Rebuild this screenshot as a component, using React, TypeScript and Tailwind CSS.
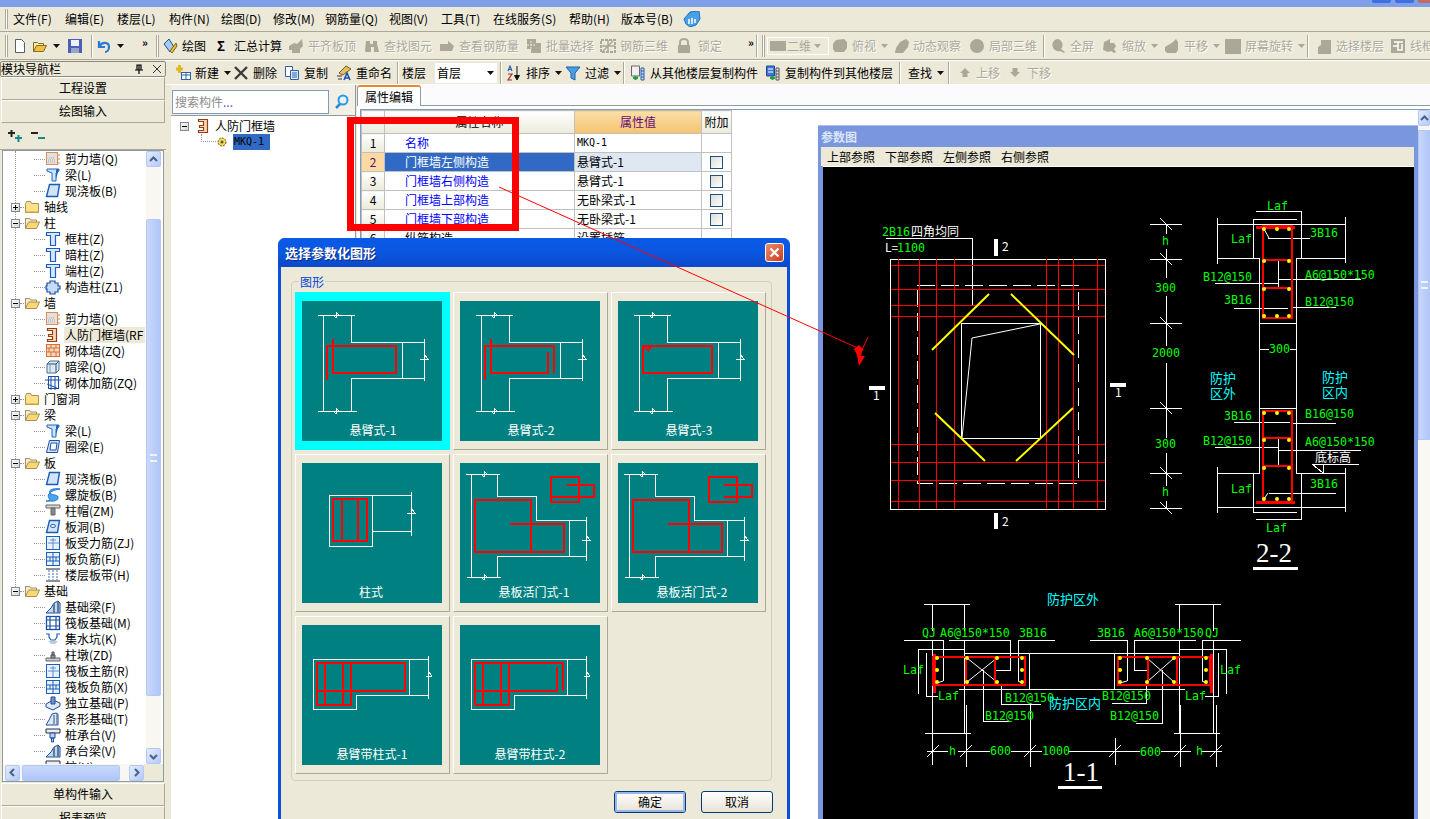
import React from 'react';

const GREY = '#aca899';

// ---- small pixel-style icons ----
const Svg = ({ children, w = 16, h = 16 }: { children: React.ReactNode; w?: number; h?: number }) => (
  <svg width={w} height={h} viewBox={`0 0 ${w} ${h}`} className="block shrink-0">{children}</svg>
);

const treeIcons: Record<string, React.ReactNode> = {
  wall: <><rect x="1.5" y="1.5" width="11" height="12" fill="#e4e0dc" stroke="#d98a60" /><path d="M3 11h8M3 9h8M4 7h6" stroke="#aaa" strokeDasharray="1 1" /><path d="M14 3v2M14 7v2M14 11v2" stroke="#e08020" /></>,
  beam: <><path d="M2 2h12v2l-3 2v8H7V6L2 4z" fill="#cfe3fa" stroke="#1c66c0" /><path d="M11 2l3 0-3 10z" fill="#1c66c0" /></>,
  slab: <path d="M4.5 1.5h10l-2 12h-11z" fill="#cfe3fa" stroke="#1b5bb4" strokeWidth="1.4" />,
  ring: <path d="M4.5 1.5h10l-2 12h-11zM6 4l-1 7h6l1-7z" fill="#cfe3fa" fillRule="evenodd" stroke="#1b4fa8" />,
  col: <path d="M1.5 1.5h13v3h-4v10h-5v-10h-4z" fill="#d7e7fb" stroke="#1c5fb8" strokeWidth="1.2" />,
  struct: <path d="M5 2h5v2h3v3h2v3h-2v3h-3v2H5v-2H2v-3H1V7h1V4h3z" fill="#c6dcf6" stroke="#1c4fa4" strokeWidth="1.2" />,
  door: <path d="M2.5 1.5h9v13h-9v-2h5v-3h-4v-2h4v-4h-5z" fill="#f4d9b8" stroke="#9a3c10" strokeWidth="1.2" />,
  brick: <><rect x="1.5" y="1.5" width="13" height="12" fill="#f6d8bc" stroke="#d8703a" /><path d="M2 5h12M2 9h12M6 2v3M11 2v3M4 5v4M9 5v4M6 9v4M11 9v4" stroke="#d8703a" /></>,
  hidden: <><path d="M2 5l3-3h9v9l-3 3H2z" fill="#dce8f4" stroke="#4a6c90" /><path d="M2 5h9v9M11 5l3-3" fill="none" stroke="#35506e" /><path d="M5 5v9" stroke="#7a9abc" /></>,
  net: <><rect x="3.5" y="1.5" width="10" height="12" fill="none" stroke="#1b4fa8" /><path d="M0 5h16M6 1v14M10 1v14M2 9l10 4" stroke="#1b4fa8" /></>,
  spiral: <path d="M15 2C8 1 3 3 5 6s9 1 8 5-6 3-12 3c6 0 3-2 3-3-3-4 3-8 11-9z" fill="#4aa4ee" stroke="#1c78d0" />,
  cap: <><path d="M1 2h14v3H1z" fill="#d8d8d8" stroke="#666" /><path d="M6 5h4v7H6z" fill="#888" stroke="#666" /></>,
  hole: <><path d="M4.5 1.5h10l-2 12h-11z" fill="#cfe3fa" stroke="#1b5bb4" strokeWidth="1.4" /><ellipse cx="8" cy="7" rx="2.5" ry="1.5" fill="#fff" stroke="#1b5bb4" /></>,
  grid: <><rect x="1.5" y="1.5" width="13" height="13" fill="#e8f1fc" stroke="#1c5fb8" /><path d="M8 3v11M3 8h11M5 5h6" stroke="#5d8fd0" /></>,
  gridb: <><rect x="1.5" y="1.5" width="13" height="13" fill="#e8f1fc" stroke="#1c5fb8" /><path d="M8 2v12M2 6h12M2 10h12M5 6v4M11 6v4" stroke="#1c5fb8" /></>,
  band: <><path d="M1 2h14M1 14h14" stroke="#222" /><path d="M4 3v10M8 3v10M12 3v10" stroke="#3a70c0" strokeDasharray="2 1" /></>,
  fbeam: <><path d="M1 14h14V4l-2-2-4 2-3 5-5 5z" fill="#c2d8f2" stroke="#1c4fa4" /><path d="M9 4v10M13 3v11" stroke="#607a9a" strokeWidth="2" /></>,
  mat: <><rect x="1.5" y="1.5" width="13" height="13" fill="#fff" stroke="#1c4fa4" strokeWidth="1.3" /><path d="M5 2v12M11 2v12M2 5h12M2 11h12" stroke="#1c4fa4" strokeWidth="1.2" /></>,
  pit: <><path d="M1 3h3v3l2 3h4l2-3V3h3" fill="none" stroke="#1c5fb8" strokeWidth="1.2" /><path d="M3 10l3 3h4l3-3z" fill="#bcd" /></>,
  pier: <><path d="M1 11h14v3H1z" fill="#ccc" stroke="#666" /><path d="M6 8h4v3H6zM7 5h2v3H7z" fill="#89a" stroke="#556" /></>,
  foot: <><path d="M1 9l7-4 7 3v3l-7 4-7-3z" fill="#dfe9f6" stroke="#1c4fa4" /><path d="M6 2h4v7H6z" fill="#7a94b4" stroke="#1c4fa4" /></>,
  strip: <><path d="M1 14l3-5 3-6 4-1 2 1v11z" fill="#dfe9f6" stroke="#1c4fa4" /><path d="M9 4v9M12 3v11" stroke="#708aa8" strokeWidth="1.6" /></>,
  pile: <><path d="M1 2h14v4H1z" fill="#e8eef6" stroke="#28303c" /><path d="M5 6h5v5H5zM6.500 11h2v4h-2z" fill="#c0d2e8" stroke="#1c4fa4" /></>,
};

const FolderClosed = () => (
  <svg width="16" height="14" viewBox="0 0 16 14" className="block shrink-0">
    <path d="M1.5 3.5l1-2h4l1 2h7v9h-13z" fill="#fbe28a" stroke="#a89050" />
    <path d="M2 11.5h12.5v1H2z" fill="#d8a830" />
  </svg>
);
const FolderOpen = () => (
  <svg width="16" height="14" viewBox="0 0 16 14" className="block shrink-0">
    <path d="M1.5 12.5v-10h4l1 1.5h6v2" fill="#f4f0d8" stroke="#a89050" />
    <path d="M1.5 12.5l3-6.5h11l-3 6.5z" fill="#f8d878" stroke="#a89050" />
  </svg>
);

type Node = { t: string; i?: string; open?: boolean; sel?: boolean; last?: boolean };
const tree: Node[] = [
  { t: '剪力墙(Q)', i: 'wall' }, { t: '梁(L)', i: 'beam' }, { t: '现浇板(B)', i: 'slab', last: true },
  { t: '轴线', open: false },
  { t: '柱', open: true },
  { t: '框柱(Z)', i: 'col' }, { t: '暗柱(Z)', i: 'col' }, { t: '端柱(Z)', i: 'col' }, { t: '构造柱(Z1)', i: 'struct', last: true },
  { t: '墙', open: true },
  { t: '剪力墙(Q)', i: 'wall' }, { t: '人防门框墙(RF', i: 'door', sel: true }, { t: '砌体墙(ZQ)', i: 'brick' }, { t: '暗梁(Q)', i: 'hidden' }, { t: '砌体加筋(ZQ)', i: 'net', last: true },
  { t: '门窗洞', open: false },
  { t: '梁', open: true },
  { t: '梁(L)', i: 'beam' }, { t: '圈梁(E)', i: 'ring', last: true },
  { t: '板', open: true },
  { t: '现浇板(B)', i: 'slab' }, { t: '螺旋板(B)', i: 'spiral' }, { t: '柱帽(ZM)', i: 'cap' }, { t: '板洞(B)', i: 'hole' }, { t: '板受力筋(ZJ)', i: 'grid' }, { t: '板负筋(FJ)', i: 'gridb' }, { t: '楼层板带(H)', i: 'band', last: true },
  { t: '基础', open: true },
  { t: '基础梁(F)', i: 'fbeam' }, { t: '筏板基础(M)', i: 'mat' }, { t: '集水坑(K)', i: 'pit' }, { t: '柱墩(ZD)', i: 'pier' }, { t: '筏板主筋(R)', i: 'grid' }, { t: '筏板负筋(X)', i: 'gridb' }, { t: '独立基础(P)', i: 'foot' }, { t: '条形基础(T)', i: 'strip' }, { t: '桩承台(V)', i: 'pile' }, { t: '承台梁(V)', i: 'fbeam' }, { t: '桩(U)', i: 'pile' },
];

const Expander = ({ open }: { open: boolean }) => (
  <span className="w-[9px] h-[9px] border border-[#7b8ba0] bg-linear-to-br from-white to-[#d8d4c4] flex items-center justify-center relative shrink-0">
    <span className="w-[5px] h-px bg-black" />
    {!open && <span className="absolute w-px h-[5px] bg-black" />}
  </span>
);

const TreeRow = ({ n }: { n: Node }) =>
  n.i ? (
    <div className="h-[16px] flex items-center relative pl-[31px]">
      <span className="w-[11px] border-t border-dotted border-[#999]" />
      <span className="w-[16px] flex justify-center"><Svg>{treeIcons[n.i]}</Svg></span>
      <span className={`ml-[3px] pl-[1px] h-[16px] leading-[16px] whitespace-nowrap ${n.sel ? 'bg-[#ece9d8] w-[81px] overflow-hidden' : ''}`}>{n.t}</span>
    </div>
  ) : (
    <div className="h-[16px] flex items-center pl-[8px]">
      <Expander open={!!n.open} />
      <span className="w-[4px] border-t border-dotted border-[#999]" />
      {n.open ? <FolderOpen /> : <FolderClosed />}
      <span className="ml-[4px] whitespace-nowrap">{n.t}</span>
    </div>
  );

const ScrollArrow = ({ d, className = '' }: { d: string; className?: string }) => (
  <div className={`border border-[#b4c8f6] rounded-[2px] bg-linear-to-br from-[#e2ebfe] to-[#b6caf8] flex items-center justify-center shrink-0 ${className}`}>
    <svg width="9" height="9" viewBox="0 0 9 9"><path d={d} fill="none" stroke="#4d6185" strokeWidth="2" /></svg>
  </div>
);

const SideBtn = ({ t, className = '' }: { t: string; className?: string }) => (
  <div className={`mx-[1px] pb-[1px] shrink-0 bg-[#ece9d8] border-t border-l border-white border-b border-b-[#aca899] border-r border-r-[#aca899] flex items-center justify-center text-[12px] ${className}`}>{t}</div>
);

const Sidebar = () => (
  <aside className="w-[166px] shrink-0 flex flex-col h-[759px] overflow-hidden">
    <div className="h-[16px] shrink-0 mt-[1px] border border-[#8a8a80] rounded-[2px] flex items-center pr-[4px] text-[12px] leading-none">
      <span className="flex-1 whitespace-nowrap">模块导航栏</span>
      <svg width="10" height="11" viewBox="0 0 10 11" className="mr-[9px]"><path d="M3 1h4v5H3zM1 6h8M5 6v4M5 1v5" fill="none" stroke="#000" strokeWidth="1.2" /></svg>
      <svg width="8" height="8" viewBox="0 0 8 8"><path d="M0 0l8 8M8 0L0 8" stroke="#333" /></svg>
    </div>
    <SideBtn t="工程设置" className="h-[23px]" />
    <SideBtn t="绘图输入" className="h-[23px]" />
    <div className="h-[27px] shrink-0 flex items-center pl-[7px] gap-[7px] border-b border-[#aca899]">
      <svg width="16" height="14" viewBox="0 0 16 14"><path d="M1 4h7M4.500 1v7" stroke="#222" strokeWidth="2" /><path d="M8 9h7M11.500 6v7" stroke="#108a8a" strokeWidth="2" /></svg>
      <svg width="16" height="14" viewBox="0 0 16 14"><path d="M1 4h7" stroke="#222" strokeWidth="2" /><path d="M8 9h7" stroke="#108a8a" strokeWidth="2" /></svg>
    </div>
    <div className="h-[632px] shrink-0 mx-[2px] border border-[#919b9c] bg-white flex flex-col overflow-hidden">
      <div className="flex-1 min-h-0 flex">
        <div className="flex-1 min-w-0 relative overflow-hidden text-[12px] leading-[16px]">
          <span className="absolute left-[12px] top-[0px] h-[440px] border-l border-dotted border-[#999]" />
          <div className="relative">
            {tree.map((n, i) => <TreeRow key={i} n={n} />)}
          </div>
        </div>
        <div className="w-[15px] mr-[2px] shrink-0 flex flex-col bg-[#f8f7f2]">
          <ScrollArrow d="M1 6l3.500-3.500L8 6" className="h-[16px]" />
          <div className="h-[52px] shrink-0" />
          <div className="h-[477px] shrink-0 border border-[#b4c8f6] rounded-[2px] bg-linear-to-r from-[#c8d8fc] to-[#b0c6f8] flex items-center justify-center">
            <div className="w-[7px] h-[8px] border-y-2 border-double border-[#eef3ff]" />
          </div>
          <div className="flex-1" />
          <ScrollArrow d="M1 3l3.500 3.500L8 3" className="h-[16px]" />
        </div>
      </div>
      <div className="h-[17px] shrink-0 flex items-center bg-[#ece9d8]">
        <div className="flex items-center pl-[2px] w-[141px] bg-[#f8f7f2] h-full">
          <ScrollArrow d="M6 1L2.500 4.500 6 8" className="w-[15px] h-[16px]" />
          <div className="ml-[2px] w-[98px] h-[16px] border border-[#b4c8f6] rounded-[2px] bg-linear-to-b from-[#c8d8fc] to-[#b0c6f8]" />
          <div className="flex-1" />
          <ScrollArrow d="M3 1l3.500 3.500L3 8" className="w-[15px] h-[16px]" />
        </div>
      </div>
    </div>
    <SideBtn t="单构件输入" className="h-[23px] mt-[1px]" />
    <SideBtn t="报表预览" className="h-[24px]" />
  </aside>
);

// ---- toolbars ----
const toolIcons: Record<string, React.ReactNode> = {
  new: <path d="M3.500 1.500h6l3 3v10h-9z" fill="#fff" stroke="#55606e" />,
  open: <><path d="M1.500 13.500v-9h4l1 1h5v2" fill="#f7e9b0" stroke="#8a6a20" /><path d="M1.500 13.500l3-6h10l-3 6z" fill="#f0c040" stroke="#8a6a20" /></>,
  save: <><rect x="1" y="1" width="14" height="14" fill="#4a5fb8" /><rect x="4" y="2" width="8" height="6" fill="#eef" /><rect x="4" y="10" width="8" height="5" fill="#9aa4c8" /></>,
  undo: <path d="M3 3v6h6M3.500 8.500C6 3 13 4 13 9c0 3-2 5-4 5" fill="none" stroke="#2c78d8" strokeWidth="2.200" />,
  draw: <><path d="M2 6l5-5 5 8-4 5z" fill="#a8c8ee" stroke="#1c4f90" /><path d="M8 13l6-8 1 3-5 7z" fill="#e8c040" stroke="#806010" /></>,
  plus: <><path d="M1 4h7M4.500 0v8" stroke="#e0b820" strokeWidth="3" /><rect x="6.500" y="7.500" width="9" height="7" fill="#fff" stroke="#2c60a8" /><path d="M7 10h8M11 8v6" stroke="#2c60a8" /></>,
  del: <path d="M2 2l12 12M14 2L2 14" stroke="#3c3c3c" strokeWidth="2.400" />,
  copy: <><path d="M1.500 1.500h7v10h-7z" fill="#fff" stroke="#2c60a8" /><path d="M6.500 5.500h8v9h-8z" fill="#dce8fa" stroke="#2c60a8" /><path d="M8 8h5M8 10h5M8 12h5" stroke="#2c60a8" /></>,
  rename: <><path d="M3 8l7-7 5 3-8 6z" fill="#e4c060" stroke="#70601c" /><path d="M1 11h5M2 14h4" stroke="#707070" strokeWidth="1.500" /><path d="M8 15l3-7 3 7M9 13h4" fill="none" stroke="#2050b0" strokeWidth="1.600" /></>,
  sort: <><path d="M2 6l2-5 2 5M2.500 4.500h3" fill="none" stroke="#3060b0" strokeWidth="1.200" /><path d="M2 9h4l-4 6h4" fill="none" stroke="#a03030" strokeWidth="1.200" /><path d="M11 1v12M8.500 10.500L11 15l2.500-4.500z" fill="#111" stroke="#111" /></>,
  filter: <path d="M1 2h14l-5 6v7l-4-2V8z" fill="#4a9ee8" stroke="#1c60a8" />,
  from: <><path d="M1.500 1h8v10h-8z" fill="#f0f0f0" stroke="#666" /><path d="M11 3h3v12h-3z" fill="#c4d8f4" stroke="#2c60a8" /><path d="M11 6h3M11 9h3M11 12h3" stroke="#2c60a8" /><path d="M3 13h5M5.500 11v4" stroke="#20a040" strokeWidth="2" /></>,
  to: <><path d="M1.500 1h8v10h-8z" fill="#3c78d8" stroke="#204890" /><path d="M3 4h5M3 7h5" stroke="#fff" /><path d="M11 3h3v12h-3z" fill="#e8e8e8" stroke="#555" /><path d="M11 6h3M11 9h3M11 12h3" stroke="#555" /><path d="M5 13h5M7.500 11v4" stroke="#20a040" strokeWidth="2" /></>,
  // disabled icons are flat silhouettes
  flat1: <path d="M1 8l5-3 3 1 5-5 1 7-3 3v4H4v-3H1z" fill={GREY} />,
  binoc: <path d="M2 3h4v3h3V3h4v3l2 8h-5V9H7v5H2l-1-1z" fill={GREY} />,
  view: <path d="M1 6h8V3l6 5-2 5H1z" fill={GREY} />,
  batch: <><path d="M1 1h9v4h5v10H5v-4H1z" fill={GREY} /><path d="M5 3v8M1 7h9" stroke="#ece9d8" strokeDasharray="2 1" /></>,
  rebar3: <><path d="M1 2h14v12H1z" fill="none" stroke={GREY} strokeWidth="2" strokeDasharray="3 1" /><path d="M3 13L13 3M1 8h14M8 2v12" stroke={GREY} strokeWidth="1.500" /></>,
  lock: <><path d="M4 7V4a4 3 0 018 0v3" fill="none" stroke={GREY} strokeWidth="2" /><rect x="2" y="7" width="12" height="8" fill={GREY} /></>,
  top: <path d="M4 2l8-1 3 3v6l-3 4H3L1 11V6z" fill={GREY} />,
  orbit: <path d="M2 15l1-5 4-6 6-3 3 3-1 5-5 6z" fill={GREY} />,
  part: <path d="M8 1a7 7 0 110 14A7 7 0 018 1z" fill={GREY} />,
  zoomall: <path d="M7 1a6 6 0 014 10l4 3-1 1-4-2A6 6 0 117 1z" fill={GREY} />,
  zoom: <path d="M2 4l6-3v4h4l2 3-2 3 2 3-2 1-3-2-3 1-5-2z" fill={GREY} />,
  pan: <path d="M1 9l5-3 3-2 3-3 2 3v8l-2 3H3l-2-2z" fill={GREY} />,
  rot: <rect x="0" y="1" width="16" height="15" fill={GREY} />,
  floor: <path d="M5 2h10v14H2V9l3-2z" fill={GREY} />,
  wire: <><rect x="1" y="1" width="14" height="14" fill={GREY} /><path d="M4 4h9M8 4v8M3 8h5M12 6v6H7" stroke="#fff" strokeWidth="1.500" fill="none" /></>,
  up: <path d="M6 1l5 5H8.500v4h-5V6H1z" fill={GREY} />,
  down: <path d="M3.500 1h5v4H11l-5 5-5-5h2.500z" fill={GREY} />,
};

const Caret = ({ dim }: { dim?: boolean }) => (
  <svg width="7" height="4" viewBox="0 0 7 4" className="shrink-0"><path d="M0 0h7L3.500 4z" fill={dim ? GREY : '#111'} /></svg>
);
const Grip = () => <span className="block w-[3px] h-[22px] border-x border-[#aca899] bg-white shrink-0" />;
const Sep = () => <span className="block w-[1px] h-[22px] bg-[#aca899] shrink-0 border-r border-white box-content" />;
const More = () => <span className="block text-[11px] font-bold leading-none -mt-[6px]">»</span>;

type ToolProps = { i?: string; t?: string; off?: boolean; caret?: boolean; className: string; gap?: string };
const Tool = ({ i, t, off, caret, className, gap = 'ml-[4px]' }: ToolProps) => (
  <div className={`flex items-center shrink-0 h-full ${className}`}>
    {i && <Svg>{toolIcons[i]}</Svg>}
    {t && <span className={`whitespace-nowrap ${i ? gap : ''} ${off ? 'text-[#aca899] [text-shadow:1px_1px_0_#fff]' : ''}`}>{t}</span>}
    {caret && <span className="ml-[5px]"><Caret dim={off} /></span>}
  </div>
);

const menus = [
  ['文件(F)', 'w-[52px]'], ['编辑(E)', 'w-[52px]'], ['楼层(L)', 'w-[52px]'], ['构件(N)', 'w-[52px]'], ['绘图(D)', 'w-[52px]'], ['修改(M)', 'w-[52px]'],
  ['钢筋量(Q)', 'w-[64px]'], ['视图(V)', 'w-[52px]'], ['工具(T)', 'w-[52px]'], ['在线服务(S)', 'w-[76px]'], ['帮助(H)', 'w-[52px]'], ['版本号(B)', 'w-[62px]'],
];

const MenuBar = () => (
  <div className="h-[25px] shrink-0 flex items-center pl-[13px] text-[12px] border-b border-[#aca899] relative">
    <span className="absolute left-[5px] top-[2px] h-[20px] w-[3px] border-x border-[#aca899] bg-white" />
    {menus.map(([t, w]) => <span key={t} className={`whitespace-nowrap shrink-0 ${w}`}>{t}</span>)}
    <svg width="18" height="16" viewBox="0 0 18 16" className="shrink-0">
      <path d="M1 8l6-7 9-1 1 8-4 6-6 2-4-3z" fill="#4aa0e8" stroke="#1c70c0" />
      <path d="M6 8v5M9 7v6M12 8v4" stroke="#fff" strokeWidth="1.500" />
    </svg>
  </div>
);

const MainToolbar = () => (
  <div className="h-[28px] shrink-0 flex items-center overflow-hidden text-[12px] border-b border-[#aca899]">
    <div className="w-[12px] pl-[5px] shrink-0"><Grip /></div>
    <Tool i="new" className="w-[20px]" />
    <Tool i="open" caret className="w-[35px]" />
    <Tool i="save" className="w-[23px]" />
    <div className="w-[6px] pl-[1px] shrink-0"><Sep /></div>
    <Tool i="undo" caret className="w-[34px]" />
    <div className="w-[22px] pl-[12px] shrink-0"><More /></div>
    <div className="w-[10px] pl-[4px] shrink-0"><Grip /></div>
    <Tool i="draw" t="绘图" className="w-[53px]" />
    <div className="w-[73px] flex items-center shrink-0"><span className="w-[12px] pl-[2px] font-bold text-[13px]">Σ</span><span className="ml-[7px]">汇总计算</span></div>
    <Tool i="flat1" t="平齐板顶" off className="w-[76px]" />
    <Tool i="binoc" t="查找图元" off className="w-[75px]" />
    <Tool i="view" t="查看钢筋量" off className="w-[87px]" />
    <Tool i="batch" t="批量选择" off className="w-[74px]" />
    <Tool i="rebar3" t="钢筋三维" off className="w-[76px]" />
    <Tool i="lock" t="锁定" off className="w-[69px]" gap="ml-[6px]" />
    <div className="w-[11px] pl-[3px] shrink-0"><More /></div>
    <div className="w-[11px] flex gap-[4px] shrink-0"><Sep /><Grip /></div>
    <div className="w-[62px] h-[18px] border border-white shrink-0 flex items-center px-[2px] gap-[1px]">
      <span className="w-[16px] h-[10px] bg-[#aca899]" />
      <span className="w-[26px] text-[#aca899]">二维</span>
      <Caret dim />
    </div>
    <Tool i="top" t="俯视" off caret className="w-[61px] ml-[3px]" />
    <Tool i="orbit" t="动态观察" off className="w-[76px]" />
    <Tool i="part" t="局部三维" off className="w-[74px]" />
    <div className="w-[7px] shrink-0"><Sep /></div>
    <Tool i="zoomall" t="全屏" off className="w-[52px]" />
    <Tool i="zoom" t="缩放" off caret className="w-[62px]" />
    <Tool i="pan" t="平移" off caret className="w-[61px]" />
    <Tool i="rot" t="屏幕旋转" off caret className="w-[82px]" />
    <div className="w-[9px] shrink-0"><Sep /></div>
    <Tool i="floor" t="选择楼层" off className="w-[74px]" />
    <Tool i="wire" t="线框" off className="w-[60px]" />
  </div>
);

const SubToolbar = () => (
  <div className="h-[25px] shrink-0 flex items-center overflow-hidden text-[12px] border-t border-white border-b border-[#aca899]">
    <div className="w-[9px] shrink-0" />
    <Tool i="plus" t="新建" caret className="w-[58px]" />
    <Tool i="del" t="删除" className="w-[51px]" />
    <Tool i="copy" t="复制" className="w-[52px]" />
    <Tool i="rename" t="重命名" className="w-[61px]" />
    <div className="w-[5px] shrink-0"><Sep /></div>
    <Tool t="楼层" className="w-[33px]" />
    <div className="w-[62px] h-[20px] bg-white flex items-center pl-[2px] pr-[3px] shrink-0">
      <span className="flex-1">首层</span><Caret />
    </div>
    <div className="w-[9px] pl-[3px] shrink-0"><Sep /></div>
    <Tool i="sort" t="排序" caret className="w-[59px]" />
    <Tool i="filter" t="过滤" caret className="w-[58px]" />
    <div className="w-[7px] shrink-0"><Sep /></div>
    <Tool i="from" t="从其他楼层复制构件" className="w-[135px]" />
    <Tool i="to" t="复制构件到其他楼层" className="w-[134px]" />
    <div className="w-[9px] shrink-0"><Sep /></div>
    <Tool t="查找" caret className="w-[40px]" />
    <div className="w-[9px] shrink-0"><Sep /></div>
    <div className="w-[50px] flex items-center shrink-0 pl-[2px]"><Svg w={12} h={12}>{toolIcons.up}</Svg><span className="ml-[5px] text-[#aca899] [text-shadow:1px_1px_0_#fff]">上移</span></div>
    <div className="w-[50px] flex items-center shrink-0 pl-[2px]"><Svg w={12} h={12}>{toolIcons.down}</Svg><span className="ml-[6px] text-[#aca899] [text-shadow:1px_1px_0_#fff]">下移</span></div>
  </div>
);

// ---- component tree + properties ----
const mono = "font-['DejaVu_Sans_Mono',monospace] text-[10px]";

const ComponentTree = () => (
  <div className="w-[185px] ml-[5px] shrink-0 flex flex-col border-r border-[#919b9c]">
    <div className="h-[31px] shrink-0 flex items-center border-b border-[#919b9c] pl-[1px] pt-[5px] pb-[2px] bg-[#f1efe6]">
      <div className="w-[157px] h-[24px] bg-white border border-[#7f9db9] flex items-center pl-[2px] text-[12px] text-[#8c8c8c]">搜索构件<span className="text-[#5a5ac8]">...</span></div>
      <div className="w-[24px] flex justify-center">
        <svg width="17" height="17" viewBox="0 0 17 17"><circle cx="10" cy="7" r="4.500" fill="#e4f2fc" stroke="#2a9ae0" strokeWidth="2" /><path d="M7 11l-4 4" stroke="#2a8ad0" strokeWidth="2.500" /></svg>
      </div>
    </div>
    <div className="flex-1 bg-white text-[12px] pt-[1px]">
      <div className="h-[16px] mt-[1px] flex items-center pl-[9px]">
        <Expander open />
        <span className="ml-[7px]"><Svg w={14} h={16}>{treeIcons.door}</Svg></span>
        <span className="ml-[5px]">人防门框墙</span>
      </div>
      <div className="h-[16px] flex items-center pl-[30px]">
        <span className="w-[15px] h-[8px] -mt-[8px] border-l border-b border-dotted border-[#999]" />
        <svg width="12" height="12" viewBox="0 0 12 12" className="shrink-0"><circle cx="6" cy="6" r="4" fill="#f4e040" stroke="#555" strokeDasharray="2 1" /><circle cx="6" cy="6" r="1.500" fill="#555" /></svg>
        <span className={`ml-[5px] px-[1px] h-[16px] w-[37px] bg-[#316ac5] text-black leading-[16px] ${mono}`}>MKQ-1</span>
      </div>
    </div>
  </div>
);

const rows = [
  ['名称', 'MKQ-1', false],
  ['门框墙左侧构造', '悬臂式-1', true],
  ['门框墙右侧构造', '悬臂式-1', true],
  ['门框墙上部构造', '无卧梁式-1', true],
  ['门框墙下部构造', '无卧梁式-1', true],
  ['纵筋构造', '设置插筋', false],
] as const;

const PropsTable = () => (
  <table className="table-fixed border-collapse w-[371px] text-[12px] leading-[16px]">
    <thead>
      <tr className="h-[23px]">
        <th className="w-[23px] border border-[#c0c0c0] bg-linear-to-b from-white to-[#ebeadb]" />
        <th className="w-[190px] border border-[#c0c0c0] bg-linear-to-b from-white to-[#ebeadb] font-normal">属性名称</th>
        <th className="w-[127px] border border-[#c0c0c0] bg-linear-to-b from-[#fbdfa6] to-[#f4c36f] font-normal text-[#660a78]">属性值</th>
        <th className="w-[30px] border border-[#c0c0c0] bg-linear-to-b from-white to-[#ebeadb] font-normal">附加</th>
      </tr>
    </thead>
    <tbody>
      {rows.map(([name, value, check], i) => {
        const on = i === 1;
        const link = i < 5;
        return (
          <tr key={i} className="h-[19px]">
            <td className={`border border-[#c0c0c0] text-center ${on ? 'bg-[#fbd9a0] text-[#660a78]' : 'bg-linear-to-b from-white to-[#ebeadb]'}`}>{i + 1}</td>
            <td className={`border border-[#c0c0c0] pl-[20px] ${on ? 'bg-[#316ac5] text-white' : link ? 'text-[#0000ff]' : ''}`}>{name}</td>
            <td className={`border border-[#c0c0c0] pl-[2px] ${on ? 'bg-[#dfe7f3]' : ''} ${i === 0 ? mono : ''}`}>{value}</td>
            <td className="border border-[#c0c0c0]">
              {check && <span className="block mx-auto w-[13px] h-[13px] border border-[#1c5180] bg-linear-to-br from-[#dcdcd7] to-white" />}
            </td>
          </tr>
        );
      })}
    </tbody>
  </table>
);

const PropsPane = () => (
  <div className="flex-1 min-w-0 ml-[1px] flex flex-col bg-white">
    <div className="h-[21px] shrink-0 bg-[#fbfbfd] border-b border-[#919b9c] flex items-end">
      <div className="w-[64px] h-[21px] -mb-px bg-white border-x border-[#919b9c] border-t-2 border-t-[#e68b2c] rounded-t-[3px] flex items-center justify-center text-[12px]">属性编辑</div>
    </div>
    <div className="flex-1 flex min-h-0 pt-[3px] pl-[3px]">
      <div className="flex-1 min-w-0 border-t border-l border-[#7f9db9]"><PropsTable /></div>
      <div className="w-[12px] shrink-0 flex flex-col bg-[#f9f8f3] border-t border-[#7f9db9]">
        <ScrollArrow d="M1 6l3.500-3.500L8 6" className="h-[16px]" />
        <div className="h-[4px] shrink-0" />
        <div className="h-[310px] shrink-0 border border-[#b4c8f6] bg-linear-to-r from-[#c8d8fc] to-[#b0c6f8] flex items-center justify-center">
          <div className="w-[7px] h-[8px] border-y-2 border-double border-[#eef3ff]" />
        </div>
      </div>
    </div>
  </div>
);

// ---- choose-figure dialog ----
const brkH = (x: number, y: number) => `M${x} ${y - 3}V${y + 3}M${x} ${y - 3}l3 3M${x} ${y + 3}l-3 -3`;
const brkV = (x: number, y: number) => `M${x - 4} ${y + 1}H${x + 4}L${x} ${y - 4}V${y + 5}`;

const wallT = `M16 14H53M21 14V110M49 14V41H122M49 110V77H122M16 110H55M100 41V77M122 38V80${brkH(34, 14)}${brkH(34, 110)}${brkV(122, 57)}`;
const door = `M6 11H40M11 11V114M7 114H41M37 11V33H76V57H126M126 54V98M37 114V93H126M109 57V93${brkH(24, 11)}${brkH(24, 114)}${brkV(126, 76)}`;
const withCol = `M11 34V84H54V70H126M11 34H126M126 31V74M107 34V70M126 46l4 5-6 1`;

const figures: { label: string; lx: number; white: string; red: string }[] = [
  { label: '悬臂式-1', lx: 71, white: wallT, red: 'M31 38V72H94V45H25V79' },
  { label: '悬臂式-2', lx: 71, white: wallT, red: 'M31 38V72H88V51M94 72V45H25V79' },
  { label: '悬臂式-3', lx: 71, white: wallT, red: 'M25 45H94V72H25zM26 46l5 4M29 45l4 3' },
  { label: '柱式', lx: 69, white: 'M27 32H70V83H27zM70 32H109M70 68H109M109 29V73' + brkV(109, 49), red: 'M31 36H65V78H31zM40 36V78M56 36V78' },
  { label: '悬板活门式-1', lx: 74, white: door, red: 'M15 37H71V89H15zM71 89H104V61H50M91 14H119V39H91zM91 34H134V22H107' },
  { label: '悬板活门式-2', lx: 74, white: door, red: 'M15 37H71V89H15zM71 89H104V61H50M91 14H119V39H91zM106 34H134V22H106' },
  { label: '悬臂带柱式-1', lx: 70, white: withCol, red: 'M15 38H103V66H15zM15 66V80H49V38M23 38V80M41 38V80' },
  { label: '悬臂带柱式-2', lx: 70, white: withCol, red: 'M15 80V38H103V66M97 42V66H15M49 38V80H15M23 38V80M41 38V80' },
];

const FigureCell = ({ f, selected }: { f: (typeof figures)[number]; selected?: boolean }) => (
  <div className={`h-[158px] border pl-[6px] pt-[8px] ${selected ? 'bg-[#00ffff] border-[#00ffff]' : 'border-t-white border-l-white border-b-[#aca899] border-r-[#aca899]'}`}>
    <div className="w-[140px] h-[140px] bg-[#008080]">
      <svg width="140" height="140" viewBox="0 0 140 140" className="block">
        <path d={f.white} fill="none" stroke="#fff" strokeWidth="1" shapeRendering="crispEdges" />
        <path d={f.red} fill="none" stroke="#ff0000" strokeWidth="2" shapeRendering="crispEdges" />
        <text x={f.lx} y="134" textAnchor="middle" className="fill-white text-[12px]">{f.label}</text>
      </svg>
    </div>
  </div>
);

const FigureDialog = () => (
  <div className="absolute left-[278px] top-[238px] w-[512px] h-[600px] rounded-t-[7px] bg-[#0a50dc] flex flex-col px-[3px] pb-[3px] text-[12px]">
    <div className="h-[29px] shrink-0 -mx-[3px] rounded-t-[7px] bg-linear-to-b from-[#0a5ae6] via-[#0a56e0] to-[#0b49c8] flex items-center pl-[7px] pr-[6px]">
      <span className="flex-1 text-white font-bold text-[13px] [text-shadow:1px_1px_0_#0a2a80]">选择参数化图形</span>
      <span className="w-[19px] h-[19px] rounded-[3px] border border-white bg-linear-to-br from-[#eb8a6c] to-[#c83c18] flex items-center justify-center">
        <svg width="11" height="11" viewBox="0 0 11 11"><path d="M1.500 1.500l8 8M9.500 1.500l-8 8" stroke="#fff" strokeWidth="2.200" /></svg>
      </span>
    </div>
    <div className="flex-1 bg-[#ece9d8] pt-[14px] pl-[10px]">
      <div className="relative w-[481px] h-[500px] border border-[#d0d0bf] rounded-[4px] pl-[3px] pt-[10px]">
        <span className="absolute left-[7px] -top-[7px] px-[1px] bg-[#ece9d8] text-[#0046d5] leading-[14px]">图形</span>
        <div className="grid grid-cols-[155px_155px_155px] gap-x-[3px] gap-y-[4px]">
          {figures.map((f, i) => <FigureCell key={f.label} f={f} selected={i === 0} />)}
        </div>
      </div>
      <div className="flex pl-[323px] gap-[15px] mt-[10px]">
        <button className="w-[72px] h-[22px] rounded-[3px] border border-[#003c74] bg-linear-to-b from-white to-[#e6e3d6] outline-2 -outline-offset-3 outline-[#9ab4ec]">确定</button>
        <button className="w-[72px] h-[22px] rounded-[3px] border border-[#003c74] bg-linear-to-b from-white to-[#e6e3d6]">取消</button>
      </div>
    </div>
  </div>
);

// ---- parameter drawing window ----
const green = "font-['DejaVu_Sans_Mono',monospace] fill-[#00ff00] text-[11.600px]";
const cyan = 'fill-[#00ffff] text-[13px]';
const white = 'fill-white text-[12px]';
const serif = "font-['Liberation_Serif',serif] fill-white text-[27px]";

const gLabels: [number, number, string][] = [
  [882, 235, '2B16'], [897, 251, '1100'],
  [1162, 244, 'h'], [1155, 291, '300'], [1152, 356, '2000'], [1155, 447, '300'], [1162, 495, 'h'],
  [1267, 209, 'Laf'], [1310, 236, '3B16'], [1231, 242, 'Laf'], [1203, 280, 'B12@150'], [1305, 278, 'A6@150*150'],
  [1224, 303, '3B16'], [1305, 305, 'B12@150'], [1269, 352, '300'], [1224, 419, '3B16'], [1305, 417, 'B16@150'],
  [1203, 444, 'B12@150'], [1305, 445, 'A6@150*150'], [1231, 492, 'Laf'], [1310, 487, '3B16'], [1266, 531, 'Laf'],
  [922, 636, 'QJ'], [940, 636, 'A6@150*150'], [1019, 636, '3B16'], [1097, 636, '3B16'], [1134, 636, 'A6@150*150'], [1205, 636, 'QJ'],
  [903, 673, 'Laf'], [938, 699, 'Laf'], [1005, 701, 'B12@150'], [985, 719, 'B12@150'], [1102, 699, 'B12@150'], [1110, 719, 'B12@150'], [1185, 699, 'Laf'], [1220, 673, 'Laf'],
  [949, 754, 'h'], [990, 754, '600'], [1042, 754, '1000'], [1140, 755, '600'], [1196, 754, 'h'],
];

const cyanLabels: [number, number, string][] = [
  [1210, 382, '防护'], [1210, 397, '区外'], [1322, 381, '防护'], [1322, 396, '区内'], [1047, 603, '防护区外'], [1049, 707, '防护区内'],
];

const dots: [number, number][] = [
  [1264, 228], [1277, 228], [1289, 228], [1264, 260], [1289, 260], [1264, 288], [1289, 288], [1264, 315], [1277, 315], [1289, 315],
  [1264, 412], [1277, 412], [1289, 412], [1264, 439], [1289, 439], [1264, 467], [1289, 467], [1264, 498], [1277, 498], [1289, 498],
  [937, 657], [967, 657], [997, 657], [1022, 657], [937, 669], [1022, 669], [937, 681], [967, 681], [997, 681], [1022, 681],
  [1120, 657], [1147, 657], [1174, 657], [1206, 657], [1120, 669], [1206, 669], [1120, 681], [1147, 681], [1174, 681], [1206, 681],
];

const slash = (x: number, y: number) => `M${x - 6} ${y - 6}L${x + 6} ${y + 6}`;
const bslash = (x: number, y: number) => `M${x - 6} ${y + 6}L${x + 6} ${y - 6}`;

const cadWhite = [
  // door frame front view
  'M890 258H1105V508H890zM961 322H1040V437H961zM886 237H972V305',
  // section 2-2 outline
  'M1217 223H1345M1217 257H1259V472H1217M1345 257H1296V472H1345M1217 506H1345M1217 217V263M1345 216V262M1217 466V512M1345 467V511M1259 322H1296M1259 407H1296',
  'M1256 210H1301V257M1253 257V218H1297M1256 518H1301V472M1253 472V511H1297',
  'M1150 223H1182M1150 258H1182M1150 322H1182M1150 407H1182M1150 472H1182M1150 507H1182',
  'M1166 223V233M1166 248V277M1166 295V345M1166 362V437M1166 452V485M1166 500V507',
  'M1268 237H1310M1215 282H1278M1278 278H1361M1278 258V288M1234 307H1288M1292 306H1336M1234 421H1290M1292 422H1336M1215 446H1278M1278 449H1361M1278 436V466M1269 492H1336',
  'M1259 348H1269M1290 348H1296M1312 463H1359M1312 463L1323 472L1324 463',
  // section 1-1
  'M924 603H970M932 603V630M964 603V630M1175 603H1221M1179 603V630M1213 603V630',
  'M904 639H943M949 639H1010M1018 639H1055M1090 639H1127M1134 639H1196M1202 639H1241',
  'M943 639V680M1010 639V669H995M1018 639V680M1127 639V680M1134 639V669H1148M1202 639V680',
  'M964 652H1180M959 688H1185M1029 652V688M1114 652V688M918 648H964M926 652V695H938M918 648V693M1180 648H1226M1218 652V695H1205M1226 648V693',
  'M932 640V732M964 640V732M1179 640V732M1213 640V732M925 732H971M1174 732H1220',
  'M1001 684V703H1041M983 669V720H1009M1146 684V702H1112M1162 669V722H1136',
  'M932 704V764M966 704V766M1030 704V766M1115 737V764M1180 704V766M1216 704V766',
  'M927 750H948M958 750H990M1011 750H1042M1068 750H1140M1161 750H1191M1201 750H1222',
].join('');

const cadDiag =
  'M1040 323L972 337L962 437' +
  slash(1166, 223) + slash(1166, 258) + slash(1166, 322) + slash(1166, 407) + slash(1166, 472) + slash(1166, 507) +
  'M1269 237L1264 228M1268 492L1264 498M943 680L937 682M1018 680L1022 682M1127 680L1120 682M1202 680L1206 682' +
  'M967 657L997 681M997 657L967 681M1147 657L1174 681M1174 657L1147 681' +
  bslash(933, 750) + bslash(966, 750) + bslash(1030, 750) + bslash(1115, 750) + bslash(1180, 750) + bslash(1216, 750);

const cadRed = [
  'M1263 225H1292V317H1263zM1263 259H1292M1263 287H1292',
  'M1263 410H1292V502H1263zM1263 437H1292M1263 465H1292',
  'M933 656H1025V684H933zM966 656V684M995 656V684',
  'M1118 656H1210V684H1118zM1148 656V684M1177 656V684',
].join('');

const CadDrawing = () => (
  <svg viewBox="823 166 591 653" className="block w-[591px] h-[653px] bg-black">
    <path d="M917 284H1078V482H917z" fill="none" stroke="#fff" strokeWidth="1" strokeDasharray="18 6" shapeRendering="crispEdges" />
    <path d={cadWhite} fill="none" stroke="#fff" strokeWidth="1" shapeRendering="crispEdges" />
    <path d={cadDiag} fill="none" stroke="#fff" strokeWidth="1" />
    <path
      d="M898 258V508M919 258V508M936 258V508M954 258V508M1046 258V508M1058 258V508M1073 258V508M1097 258V508M891 264H1105M891 288H1105M891 304H1105M891 315H1105M891 443H1105M891 461H1105M891 479H1105M891 500H1105"
      fill="none" stroke="#ff0000" strokeWidth="1" shapeRendering="crispEdges"
    />
    <path d="M989 293L932 349M1011 293L1074 354M935 412L985 460M1073 407L1016 460" stroke="#ffff00" strokeWidth="2" />
    <path d={cadRed} fill="none" stroke="#ff0000" strokeWidth="2" shapeRendering="crispEdges" />
    <path d="M1256 226H1295M1256 501H1295M934 653V692M1211 653V692" stroke="#ff0000" strokeWidth="3" shapeRendering="crispEdges" />
    <rect x="994" y="238" width="4" height="17" fill="#fff" />
    <rect x="994" y="512" width="4" height="16" fill="#fff" />
    <rect x="869" y="385" width="16" height="4" fill="#fff" />
    <rect x="1110" y="382" width="16" height="4" fill="#fff" />
    <rect x="1253" y="566" width="45" height="3" fill="#fff" />
    <rect x="1058" y="785" width="44" height="3" fill="#fff" />
    {dots.map(([x, y], i) => <circle key={i} cx={x} cy={y} r="2" fill="#ffff00" />)}
    <text x="1002" y="250" className={white}>2</text>
    <text x="1002" y="525" className={white}>2</text>
    <text x="873" y="399" className={white}>1</text>
    <text x="1115" y="396" className={white}>1</text>
    <text x="911" y="235" className={white}>四角均同</text>
    <text x="885" y="251" className={white}>L=</text>
    <text x="1315" y="461" className={white}>底标高</text>
    <text x="1256" y="561" className={serif}>2-2</text>
    <text x="1063" y="780" className={serif}>1-1</text>
    {gLabels.map(([x, y, t], i) => <text key={i} x={x} y={y} className={green}>{t}</text>)}
    {cyanLabels.map(([x, y, t], i) => <text key={i} x={x} y={y} className={cyan}>{t}</text>)}
  </svg>
);

const ParamWindow = () => (
  <div className="absolute left-[818px] top-[125px] w-[600px] h-[694px] bg-[#7a96df] flex flex-col pl-[3px] pr-[4px] border-t border-[#aebfef] text-[12px] overflow-hidden">
    <div className="h-[21px] shrink-0 flex items-center text-[#dce6fb] font-bold">参数图</div>
    <div className="h-[19px] shrink-0 bg-[#ece9d8] flex items-center pl-[6px]">
      {['上部参照', '下部参照', '左侧参照', '右侧参照'].map(t => <span key={t} className="w-[58px] shrink-0">{t}</span>)}
    </div>
    <div className="ml-[2px] border-t border-white"><CadDrawing /></div>
  </div>
);

// red mark-up drawn over the whole screen
const Markup = () => (
  <svg width="1430" height="819" viewBox="0 0 1430 819" className="absolute inset-0 pointer-events-none">
    <rect x="350.500" y="120.500" width="165" height="107" fill="none" stroke="#ff0000" strokeWidth="7" />
    <path d="M499 187L860 349M868 337L861 352" stroke="#ff0000" strokeWidth="1" fill="none" />
    <path d="M854 349l5-4 5 5-2 1-1 5h4l-6 10-2-11-1-2z" fill="#ff0000" />
  </svg>
);

export default function App() {
  return (
    <div className="relative w-[1430px] h-[819px] overflow-hidden bg-[#ece9d8] text-black font-['Noto_Sans_CJK_SC','Liberation_Sans',sans-serif] flex flex-col">
      <div className="h-[7px] shrink-0 bg-[#7f9fe6] flex justify-end items-start gap-[4px]">
        <span className="w-[19px] h-[3px] rounded-b-[2px] bg-[#3f6fe0]" />
        <span className="w-[19px] h-[3px] rounded-b-[2px] bg-[#3f6fe0]" />
        <span className="w-[12px] h-[3px] rounded-bl-[2px] bg-[#c8695f]" />
      </div>
      <MenuBar />
      <MainToolbar />
      <div className="flex-1 min-h-0 flex">
        <Sidebar />
        <div className="flex-1 min-w-0 flex flex-col">
          <SubToolbar />
          <div className="flex-1 min-h-0 flex">
            <ComponentTree />
            <PropsPane />
          </div>
        </div>
      </div>
      <ParamWindow />
      <FigureDialog />
      <Markup />
    </div>
  );
}
